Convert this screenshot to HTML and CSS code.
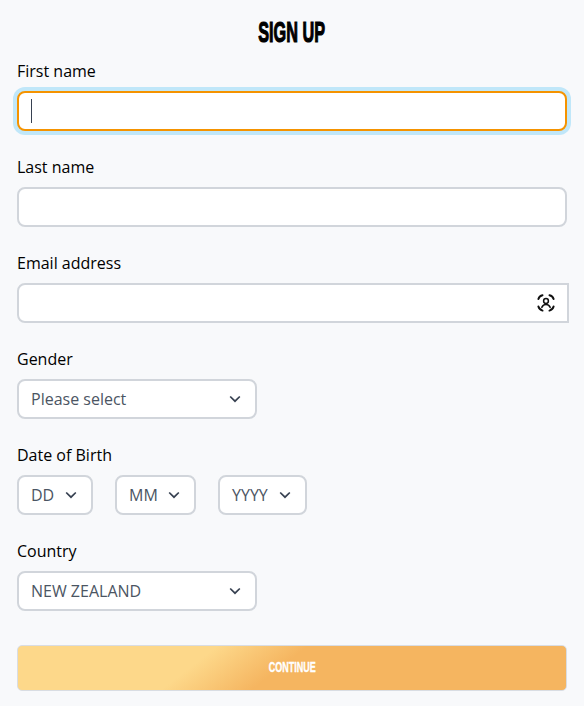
FILE: index.html
```html
<!DOCTYPE html>
<html lang="en">
<head>
<meta charset="utf-8">
<title>Sign up</title>
<link rel="stylesheet" href="styles.css">
</head>
<body>
<form class="form">
  <h1 class="title"><span class="title-text">SIGN UP</span></h1>
  <div class="field">
    <label class="label">First name</label>
    <div class="input input-focus"><span class="caret"></span></div>
  </div>
  <div class="field">
    <label class="label">Last name</label>
    <div class="input"></div>
  </div>
  <div class="field">
    <label class="label">Email address</label>
    <div class="input input-email">
      <svg class="scan" viewBox="0 0 20 20" width="20" height="20" fill="none" stroke="#111" stroke-width="2" stroke-linecap="round">
        <path d="M6.5 2.2 C4.5 2.6 3 4 2.4 6"/>
        <path d="M13.5 2.2 C15.5 2.6 17 4 17.6 6"/>
        <path d="M2.4 13.5 C3 15.6 4.5 17 6.5 17.6"/>
        <path d="M17.6 13.5 C17 15.6 15.5 17 13.5 17.6"/>
        <circle cx="10" cy="8" r="2.4" stroke-width="1.5"/>
        <path d="M5.8 14.4 C6.8 12.3 8.2 11.6 10 11.6 C11.8 11.6 13.2 12.3 14.2 14.4" stroke-width="1.5"/>
      </svg>
    </div>
  </div>
  <div class="field">
    <label class="label">Gender</label>
    <div class="select select-wide"><span>Please select</span>
      <svg class="chev" viewBox="0 0 12 8" width="12" height="8"><path d="M1.2 1.5 L6 6.2 L10.8 1.5" fill="none" stroke="#374151" stroke-width="1.7"/></svg>
    </div>
  </div>
  <div class="field">
    <label class="label">Date of Birth</label>
    <div class="dob">
      <div class="select sel-dd"><span>DD</span>
        <svg class="chev" viewBox="0 0 12 8" width="12" height="8"><path d="M1.2 1.5 L6 6.2 L10.8 1.5" fill="none" stroke="#374151" stroke-width="1.7"/></svg>
      </div>
      <div class="select sel-mm"><span>MM</span>
        <svg class="chev" viewBox="0 0 12 8" width="12" height="8"><path d="M1.2 1.5 L6 6.2 L10.8 1.5" fill="none" stroke="#374151" stroke-width="1.7"/></svg>
      </div>
      <div class="select sel-yy"><span>YYYY</span>
        <svg class="chev" viewBox="0 0 12 8" width="12" height="8"><path d="M1.2 1.5 L6 6.2 L10.8 1.5" fill="none" stroke="#374151" stroke-width="1.7"/></svg>
      </div>
    </div>
  </div>
  <div class="field">
    <label class="label">Country</label>
    <div class="select select-wide"><span>NEW ZEALAND</span>
      <svg class="chev" viewBox="0 0 12 8" width="12" height="8"><path d="M1.2 1.5 L6 6.2 L10.8 1.5" fill="none" stroke="#374151" stroke-width="1.7"/></svg>
    </div>
  </div>
  <button type="button" class="btn"><span class="btn-text">CONTINUE</span></button>
</form>
</body>
</html>
```

FILE: styles.css
```css
* { box-sizing: border-box; }
html, body { margin: 0; padding: 0; }
body {
  width: 584px;
  height: 706px;
  overflow: hidden;
  background: #f8f9fb;
  font-family: "Open Sans", "Noto Sans", sans-serif;
  color: #000;
}
.form {
  display: flex;
  flex-direction: column;
  padding: 16px 17px 0;
  width: 584px;
}
.title {
  margin: 0;
  height: 43px;
  line-height: 32px;
  text-align: center;
  font-family: "Liberation Sans", sans-serif;
  font-weight: 700;
  font-size: 29px;
}
.title-text {
  display: inline-block;
  transform: scaleX(0.56);
  -webkit-text-stroke: 1.2px #000;
}
.field { margin-bottom: 24px; }
.label {
  display: block;
  font-size: 16px;
  line-height: 24px;
  margin-bottom: 8px;
}
.input {
  height: 40px;
  width: 550px;
  background: #fff;
  border: 2px solid #d1d5db;
  border-radius: 8px;
}
.input-focus {
  display: flex;
  align-items: center;
  padding-left: 12px;
  border-color: #f59300;
  box-shadow: 0 0 0 4px #c0e7f9;
}
.caret { width: 1px; height: 24px; background: #374151; }
.input-email {
  width: 552px;
  border-radius: 8px 0 0 8px;
  display: flex;
  align-items: center;
  justify-content: flex-end;
  padding-right: 11px;
}
.select {
  height: 40px;
  background: #fff;
  border: 2px solid #d1d5db;
  border-radius: 8px;
  display: flex;
  align-items: center;
  justify-content: space-between;
  padding: 0 14px 0 12px;
  font-size: 16px;
  color: #4b5563;
}
.select-wide { width: 240px; }
.dob { display: flex; gap: 22px; }
.sel-dd { width: 76px; }
.sel-mm { width: 81px; }
.sel-yy { width: 89px; }
.btn {
  margin-top: 10px;
  width: 550px;
  height: 46px;
  padding: 0 0 3px;
  border: 1px solid #d9dde3;
  border-radius: 5px;
  background: linear-gradient(142deg, #fdd88a 33%, #f5b560 48%);
  color: #fff;
  font-family: "Liberation Sans", sans-serif;
  font-weight: 700;
  font-size: 15px;
}
.btn-text {
  display: inline-block;
  transform: scaleX(0.6);
  -webkit-text-stroke: 0.4px #fff;
}
```
